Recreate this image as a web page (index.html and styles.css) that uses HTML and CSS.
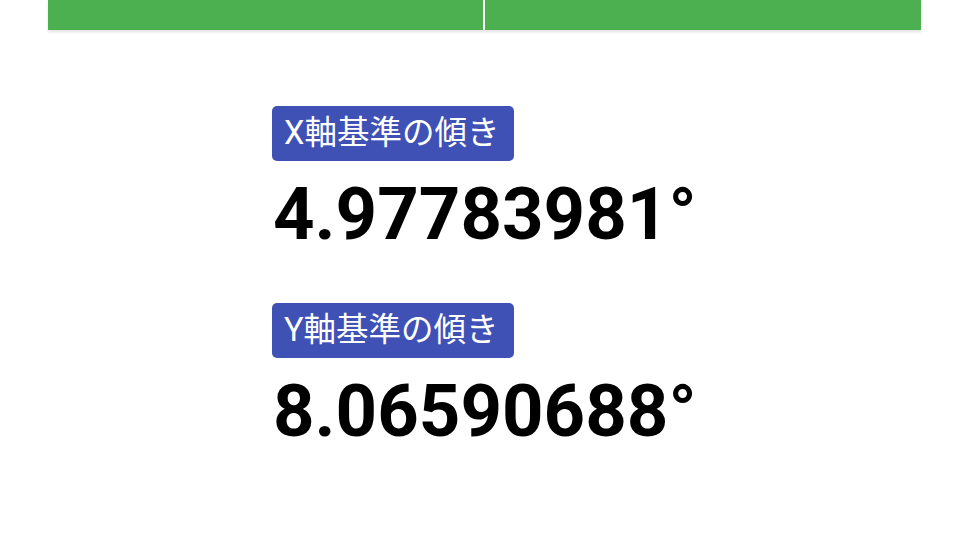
FILE: index.html
```html
<!DOCTYPE html>
<html lang="ja">
<head>
<meta charset="utf-8">
<link rel="stylesheet" href="styles.css">
</head>
<body>
<header class="tabs">
  <div class="tab"></div>
  <div class="tab"></div>
</header>
<main class="results">
  <section class="result">
    <div class="label">X軸基準の傾き</div>
    <div class="value">4.97783981°</div>
  </section>
  <section class="result">
    <div class="label">Y軸基準の傾き</div>
    <div class="value">8.06590688°</div>
  </section>
</main>
</body>
</html>
```
FILE: styles.css
```css
html, body {
  margin: 0;
  padding: 0;
  background: #ffffff;
}
body {
  font-family: Roboto, "Noto Sans CJK JP", sans-serif;
}
.tabs {
  display: flex;
  gap: 2px;
  width: 873px;
  height: 30px;
  margin: 0 auto;
  box-shadow: 0 2px 3px rgba(0, 0, 0, 0.12);
}
.tab {
  flex: 1;
  background: #4caf50;
}
.results {
  width: 424px;
  margin: 76px auto 0;
  display: flex;
  flex-direction: column;
  gap: 52px;
}
.result {
  display: flex;
  flex-direction: column;
  align-items: flex-start;
  gap: 17px;
}
.label {
  background: #3f51b5;
  color: #ffffff;
  font-family: Roboto, "Noto Sans CJK JP", sans-serif;
  font-size: 32.5px;
  font-weight: 400;
  line-height: 55px;
  height: 55px;
  padding: 0 15px 0 12px;
  border-radius: 5px;
}
.value {
  font-family: Roboto, sans-serif;
  font-weight: 700;
  font-size: 72.5px;
  line-height: 73px;
  color: #000000;
  margin-left: 1px;
}
```
